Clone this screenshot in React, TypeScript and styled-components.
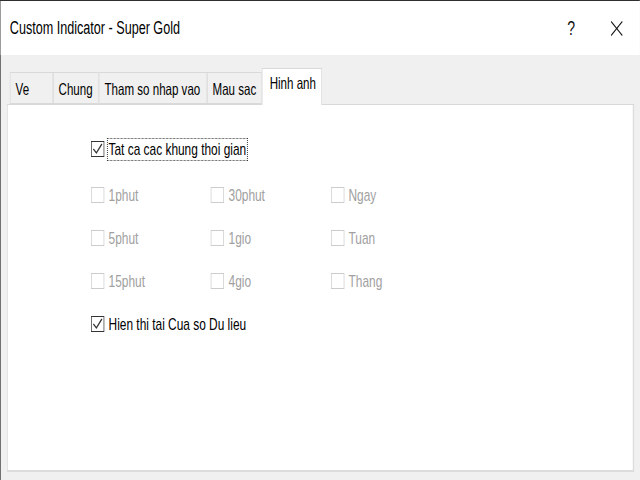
import React from "react";
import styled, { createGlobalStyle } from "styled-components";

const Global = createGlobalStyle`
  html, body { margin: 0; padding: 0; background: #f0f0f0; overflow: hidden; }
  body { font-family: "Liberation Sans", Arial, sans-serif; }
`;

/* The reference is a horizontally squeezed dialog: lay it out wide and squeeze it to 640px. */
const SQUEEZE = 0.7;
const W = 640 / SQUEEZE;

const Stage = styled.div`
  width: ${W}px;
  height: 480px;
  transform: scaleX(${SQUEEZE});
  transform-origin: 0 0;
`;

const Window = styled.div`
  box-sizing: border-box;
  width: ${W}px;
  height: 480px;
  display: flex;
  flex-direction: column;
  border-top: 1px solid #2f2f2f;
  border-left: 1px solid #3a3a3a;
  background: #f0f0f0;
`;

const TitleBar = styled.div`
  height: 54px;
  flex: none;
  display: flex;
  align-items: center;
  background: #ffffff;
  padding-left: 13px;
`;

const Title = styled.div`
  flex: 1;
  font-size: 18px;
  color: #000;
  margin-top: 1px;
`;

const CaptionButton = styled.div`
  width: 65.7px;
  height: 54px;
  display: flex;
  align-items: center;
  justify-content: center;
  font-size: 20px;
  color: #111;
`;

const Body = styled.div`
  flex: 1;
  display: flex;
  flex-direction: column;
  padding: 13px 8.6px 8px 9px;
  min-height: 0;
`;

const TabStrip = styled.div`
  display: flex;
  align-items: flex-end;
  height: 36px;
  padding-left: 4.3px;
  position: relative;
  z-index: 1;
`;

const Tab = styled.div<{ $w: number; $active?: boolean }>`
  box-sizing: border-box;
  width: ${(p) => p.$w}px;
  height: ${(p) => (p.$active ? 37 : 32)}px;
  margin-bottom: ${(p) => (p.$active ? -1 : 0)}px;
  padding: ${(p) => (p.$active ? "5px 0 0 10px" : "7px 0 0 7px")};
  background: ${(p) => (p.$active ? "#ffffff" : "#f0f0f0")};
  border: 1px solid #d9d9d9;
  border-bottom: ${(p) => (p.$active ? "none" : "1px solid #d9d9d9")};
  & + & { border-left: ${(p) => (p.$active ? "1px solid #d9d9d9" : "none")}; }
  font-size: 16.5px;
  line-height: 19px;
  color: #000;
  white-space: nowrap;
`;

const Panel = styled.div`
  flex: 1;
  background: #ffffff;
  border: 1px solid #d9d9d9;
  border-right: 2px solid #dcdcdc;
  border-bottom: 2px solid #dcdcdc;
  display: flex;
  flex-direction: column;
  gap: 19px;
  padding: 32px 0 0 119px;
`;

const Grid = styled.div`
  display: grid;
  grid-template-columns: repeat(3, 171.4px);
  row-gap: 19px;
  margin-top: 3px;
`;

const Row = styled.div`
  display: flex;
  align-items: center;
  height: 24px;
  gap: 4.7px;
`;

const Box = styled.span<{ $disabled?: boolean }>`
  box-sizing: border-box;
  width: 19px;
  height: 16px;
  flex: none;
  border: 1px solid ${(p) => (p.$disabled ? "#cccccc" : "#333333")};
  border-left-width: 1.4px;
  border-right-width: 1.4px;
  background: #fff;
  display: flex;
  align-items: center;
  justify-content: center;
`;

const Label = styled.span<{ $disabled?: boolean; $focus?: boolean }>`
  font-size: 17px;
  line-height: 21px;
  padding: 0 1.4px;
  color: ${(p) => (p.$disabled ? "#a0a0a0" : "#000")};
  outline: ${(p) => (p.$focus ? "1px dotted #222" : "none")};
  white-space: nowrap;
`;

const Check = () => (
  <svg width="17" height="14" viewBox="0 0 14 14" preserveAspectRatio="none">
    <polyline points="2,7 5.5,11 12,2" fill="none" stroke="#333" strokeWidth="1.4" />
  </svg>
);

const CloseGlyph = () => (
  <svg width="18" height="15" viewBox="0 0 18 15">
    <line x1="1" y1="0.5" x2="17" y2="14.5" stroke="#111" strokeWidth="1.3" />
    <line x1="17" y1="0.5" x2="1" y2="14.5" stroke="#111" strokeWidth="1.3" />
  </svg>
);

type CB = { label: string; checked?: boolean; disabled?: boolean; focus?: boolean };

const CheckRow = ({ label, checked, disabled, focus }: CB) => (
  <Row>
    <Box $disabled={disabled}>{checked && <Check />}</Box>
    <Label $disabled={disabled} $focus={focus}>{label}</Label>
  </Row>
);

const tabs = [
  { label: "Ve", w: 61.4 },
  { label: "Chung", w: 65.7 },
  { label: "Tham so nhap vao", w: 154.3 },
  { label: "Mau sac", w: 78.6 },
  { label: "Hinh anh", w: 85.7, active: true },
];

const periods = ["1phut", "30phut", "Ngay", "5phut", "1gio", "Tuan", "15phut", "4gio", "Thang"];

export default function App() {
  return (
    <Stage>
      <Global />
      <Window>
        <TitleBar>
          <Title>Custom Indicator - Super Gold</Title>
          <CaptionButton>?</CaptionButton>
          <CaptionButton>
            <CloseGlyph />
          </CaptionButton>
        </TitleBar>
        <Body>
          <TabStrip>
            {tabs.map((t) => (
              <Tab key={t.label} $w={t.w} $active={t.active}>
                {t.label}
              </Tab>
            ))}
          </TabStrip>
          <Panel>
            <CheckRow label="Tat ca cac khung thoi gian" checked focus />
            <Grid>
              {periods.map((p) => (
                <CheckRow key={p} label={p} disabled />
              ))}
            </Grid>
            <CheckRow label="Hien thi tai Cua so Du lieu" checked />
          </Panel>
        </Body>
      </Window>
    </Stage>
  );
}
